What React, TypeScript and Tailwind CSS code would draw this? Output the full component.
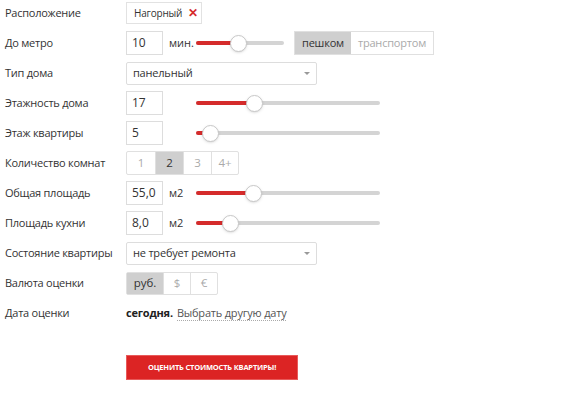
import React from "react"

const font = { fontFamily: '"Open Sans", "Liberation Sans", sans-serif' }

function Row({ label, children }: { label: string; children?: React.ReactNode }) {
  return (
    <div className="flex items-center h-[30px]">
      <div className="w-[121px] shrink-0 text-[11px] tracking-[-0.25px] text-[#333]">{label}</div>
      <div className="flex items-center">{children}</div>
    </div>
  )
}

function Input({ value }: { value: string }) {
  return (
    <div className="w-[37px] h-[24px] border border-[#ddd] bg-white flex items-center pl-[5px] text-[12px] text-[#333]">
      {value}
    </div>
  )
}

function Slider({ width, pos }: { width: number; pos: number }) {
  return (
    <div className="relative h-[18px] flex items-center" style={{ width }}>
      <div className="h-[4px] w-full rounded-full bg-[#d4d4d4]" />
      <div className="absolute left-0 h-[4px] rounded-full bg-[#d52b2b]" style={{ width: pos }} />
      <div
        className="absolute w-[17px] h-[17px] rounded-full bg-white border border-[#c8c8c8] shadow-sm"
        style={{ left: pos - 8 }}
      />
    </div>
  )
}

function Select({ value }: { value: string }) {
  return (
    <div className="w-[191px] h-[23px] border border-[#ddd] rounded-[2px] bg-white flex items-center justify-between pl-[6px] pr-[6px] text-[11px] tracking-[-0.2px] text-[#333]">
      <span>{value}</span>
      <span className="w-0 h-0 border-l-[3px] border-r-[3px] border-t-[3px] border-l-transparent border-r-transparent border-t-[#999]" />
    </div>
  )
}

function Segmented({ items, active, widths, h = 24 }: { items: string[]; active: number; widths: number[]; h?: number }) {
  return (
    <div className="flex border border-[#e0e0e0] rounded-[2px] bg-white" style={{ height: h }}>
      {items.map((it, i) => (
        <div
          key={it}
          className={
            "flex items-center justify-center text-[11.5px] " +
            (i > 0 ? "border-l border-[#e0e0e0] " : "") +
            (i === active ? "bg-[#cfcfcf] text-[#333]" : "text-[#aaa]")
          }
          style={{ width: widths[i] }}
        >
          {it}
        </div>
      ))}
    </div>
  )
}

export default function App() {
  return (
    <div className="w-[582px] h-[395px] bg-white pl-[5px] -mt-[2px]" style={font}>
      <Row label="Расположение">
        <div className="h-[22px] w-[76px] border border-[#e2e2e2] flex items-center pl-[7px] text-[10px] tracking-[-0.2px] text-[#333]">
          Нагорный
          <span className="ml-[6px] text-[#d52b2b] text-[12px] font-bold leading-none">✕</span>
        </div>
      </Row>
      <Row label="До метро">
        <Input value="10" />
        <span className="ml-[6px] text-[11px] text-[#333] w-[27px]">мин.</span>
        <Slider width={88} pos={42} />
        <div className="ml-[10px]">
          <div className="flex h-[24px] border border-[#e0e0e0]">
            <div className="w-[56px] bg-[#cfcfcf] flex items-center justify-center text-[11px] tracking-[-0.2px] text-[#333]">пешком</div>
            <div className="w-[82px] flex items-center justify-center text-[11px] tracking-[-0.2px] text-[#aaa]">транспортом</div>
          </div>
        </div>
      </Row>
      <Row label="Тип дома">
        <Select value="панельный" />
      </Row>
      <Row label="Этажность дома">
        <Input value="17" />
        <div className="ml-[33px]">
          <Slider width={184} pos={58} />
        </div>
      </Row>
      <Row label="Этаж квартиры">
        <Input value="5" />
        <div className="ml-[33px]">
          <Slider width={184} pos={14} />
        </div>
      </Row>
      <Row label="Количество комнат">
        <Segmented items={["1", "2", "3", "4+"]} active={1} widths={[28, 28, 28, 27]} />
      </Row>
      <Row label="Общая площадь">
        <Input value="55,0" />
        <span className="ml-[6px] text-[11px] text-[#333] w-[27px]">м2</span>
        <Slider width={184} pos={57} />
      </Row>
      <Row label="Площадь кухни">
        <Input value="8,0" />
        <span className="ml-[6px] text-[11px] text-[#333] w-[27px]">м2</span>
        <Slider width={184} pos={34} />
      </Row>
      <Row label="Состояние квартиры">
        <Select value="не требует ремонта" />
      </Row>
      <Row label="Валюта оценки">
        <Segmented items={["руб.", "$", "€"]} active={0} widths={[36, 27, 27]} h={23} />
      </Row>
      <Row label="Дата оценки">
        <span className="text-[11px] tracking-[-0.2px] font-bold text-[#222]">сегодня.</span>
        <span className="ml-[4px] text-[11px] tracking-[-0.2px] text-[#555] border-b border-dotted border-[#aaa] leading-[15px]">
          Выбрать другую дату
        </span>
      </Row>
      <div className="pl-[121px] mt-[27px]">
        <div className="w-[172px] h-[25px] bg-[#dc2424] border border-[#e85a5a] flex items-center justify-center text-white text-[7.5px] font-bold uppercase tracking-tight">
          Оценить стоимость квартиры!
        </div>
      </div>
    </div>
  )
}
